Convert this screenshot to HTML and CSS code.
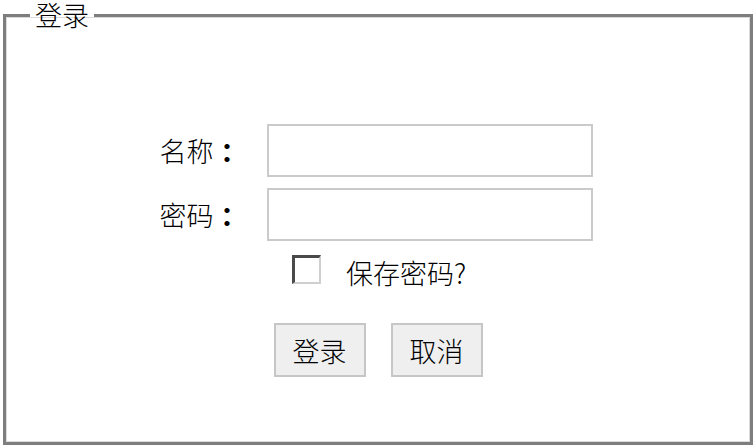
FILE: index.html
```html
<!DOCTYPE html>
<html lang="zh-CN">
<head>
<meta charset="utf-8">
<title>登录</title>
<link rel="stylesheet" href="styles.css">
</head>
<body>
<fieldset class="login">
  <legend class="login-title">登录</legend>
  <div class="form-grid">
    <label class="field-label" for="name">名称<span class="colon">：</span></label>
    <input class="field-input" id="name" type="text">
    <label class="field-label" for="pwd">密码<span class="colon">：</span></label>
    <input class="field-input" id="pwd" type="password">
  </div>
  <div class="remember-row">
    <input class="remember-box" id="remember" type="checkbox">
    <label class="remember-text" for="remember">保存密码?</label>
  </div>
  <div class="button-row">
    <button class="btn" type="button">登录</button>
    <button class="btn" type="button">取消</button>
  </div>
</fieldset>
</body>
</html>
```

FILE: styles.css
```css
html, body {
  margin: 0;
  padding: 0;
  background: #ffffff;
}

body {
  font-family: "Noto Sans CJK SC", "Liberation Sans", sans-serif;
  font-weight: 300;
  color: #000;
}

.login {
  box-sizing: border-box;
  margin: 0 3px;
  padding: 0;
  height: 445px;
  border: 3px solid #7e7e7e;
  box-shadow: inset 0 0 0 1px #dadada;
  min-width: 0;
}

.login-title {
  margin-left: 24px;
  padding: 0 5px;
  font-size: 27px;
  line-height: 30px;
}

.form-grid {
  display: grid;
  grid-template-columns: 81px 326px;
  grid-auto-rows: 53px;
  column-gap: 26px;
  row-gap: 11px;
  justify-content: center;
  align-items: center;
  margin-top: 94px;
  padding-right: 4px;
}

.field-label {
  font-size: 27px;
  line-height: 30px;
  white-space: nowrap;
  display: flex;
  justify-content: flex-end;
}

.colon {
  display: inline-block;
  width: 27px;
  text-align: center;
  font-weight: 700;
  font-feature-settings: "halt" 1;
}

.field-input {
  box-sizing: border-box;
  width: 326px;
  height: 53px;
  margin: 0;
  border: 2px solid #cacaca;
  background: #fff;
  outline: none;
}

.remember-row {
  display: flex;
  justify-content: center;
  align-items: flex-start;
  gap: 25px;
  margin-top: 14px;
  padding-left: 2px;
  height: 36px;
}

.remember-box {
  appearance: none;
  -webkit-appearance: none;
  box-sizing: border-box;
  width: 29px;
  height: 29px;
  margin: 0;
  border-top: 3px solid #4a4a4a;
  border-left: 3px solid #4a4a4a;
  border-right: 2px solid #cfcfcf;
  border-bottom: 2px solid #cfcfcf;
  background: #fff;
}

.remember-text {
  font-size: 27px;
  line-height: 32px;
  margin-top: 2px;
}

.button-row {
  display: flex;
  justify-content: center;
  gap: 25px;
  margin-top: 32px;
}

.btn {
  box-sizing: border-box;
  width: 92px;
  height: 54px;
  padding: 0;
  border: 2px solid #c6c6c6;
  background: #efefef;
  font-family: "Noto Sans CJK SC", "Liberation Sans", sans-serif;
  font-weight: 300;
  font-size: 27px;
  color: #000;
}
```
